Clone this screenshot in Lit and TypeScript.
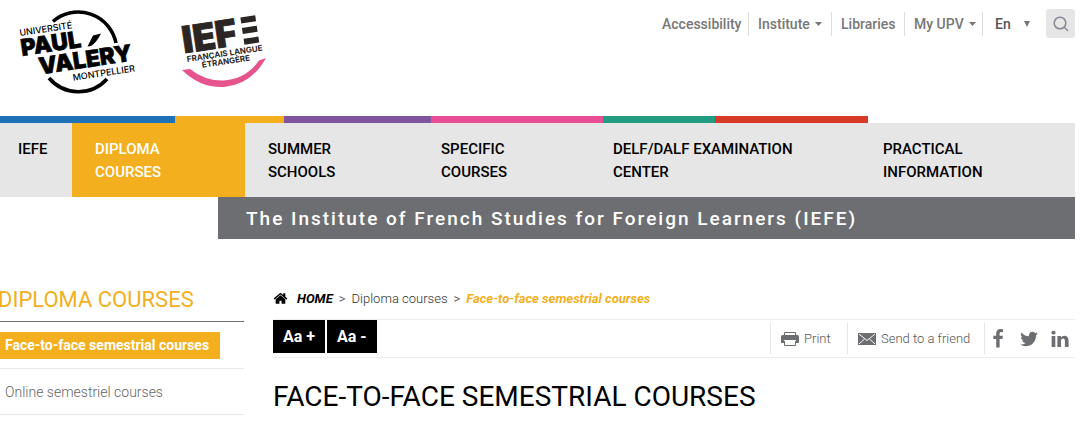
import { LitElement, html, css } from "lit";
import { customElement } from "lit/decorators.js";
import { classMap } from "lit/directives/class-map.js";

const FA = {
  home: "M1472 992v480q0 26-19 45t-45 19h-384v-384h-256v384h-384q-26 0-45-19t-19-45v-480q0-1 .5-3t.5-3l575-474 575 474q1 2 1 6zm223-69l-62 74q-8 9-21 11h-3q-13 0-21-7l-692-577-692 577q-12 8-24 7-13-2-21-11l-62-74q-8-10-7-23.5t11-21.5l719-599q32-26 76-26t76 26l244 204v-195q0-14 9-23t23-9h192q14 0 23 9t9 23v408l219 182q10 8 11 21.5t-7 23.5z",
  facebook: "M1343 12v264h-157q-86 0-116 36t-30 108v189h293l-39 296h-254v759h-306v-759h-255v-296h255v-218q0-186 104-288.5t277-102.5q147 0 228 12z",
  twitter: "M1684 408q-67 98-162 167 1 14 1 42 0 130-38 259.5t-115.5 248.5-184.5 210.5-258 146-323 54.5q-271 0-496-145 35 4 78 4 225 0 401-138-105-2-188-64.5t-114-159.5q33 5 61 5 43 0 85-11-112-23-185.5-111.5t-73.5-205.5v-4q68 38 146 41-66-44-105-115t-39-154q0-88 44-163 121 149 294.5 238.5t371.5 99.5q-8-38-8-74 0-134 94.5-228.5t228.5-94.5q140 0 236 102 109-21 205-78-37 115-142 178 93-10 186-50z",
  linkedin: "M477 625v991h-330v-991h330zm21-306q1 73-50.5 122t-135.5 49h-2q-82 0-132-49t-50-122q0-74 51.5-122.5t134.5-48.5 133 48.5 51 122.5zm1166 729v568h-329v-530q0-105-40.5-164.5t-126.5-59.5q-63 0-105.5 34.5t-63.5 85.5q-11 30-11 81v553h-329q2-399 2-647t-1-296l-1-48h329v144h-2q20-32 41-56t56.5-52 87-43.5 114.5-15.5q171 0 275 113.5t104 332.5z",
};

const icon = (d: string, size = 20) =>
  html`<svg width=${size} height=${size} viewBox="0 0 1792 1792" aria-hidden="true"><path fill="currentColor" d=${d}></path></svg>`;

const base = css`
  * { box-sizing: border-box; }
  a { color: inherit; text-decoration: none; }
  ul, ol { list-style: none; margin: 0; padding: 0; }
  svg { display: block; flex: none; }
`;

@customElement("site-header")
class SiteHeader extends LitElement {
  static styles = [base, css`
    :host { display: block; }
    .top { display: flex; justify-content: space-between; align-items: flex-start; height: 116px; }
    .logos { display: flex; }
    .tools { display: flex; align-items: center; padding-top: 9px; font-size: 14px; font-weight: 500; color: #777; }
    .links { display: grid; grid-template-columns: 87px 83px 73px 78px; }
    .links li { border-right: 1px solid #ddd; height: 24px; display: flex; align-items: center; padding-left: 9px; }
    .links li:first-child { padding-left: 0; }
    .links a { display: flex; align-items: center; gap: 5px; white-space: nowrap; }
    .lang { display: flex; align-items: center; width: 63px; padding-left: 12px; position: relative; }
    .lang select { appearance: none; border: 0; background: none; padding: 0; margin: 0; font: inherit; color: #555; width: 40px; }
    .lang svg { position: absolute; right: 16px; pointer-events: none; }
    .search { width: 29px; height: 29px; border: 0; border-radius: 3px; background: #e6e6e6; padding: 0; display: grid; place-items: center; color: #858796; }
    .stripe { display: grid; grid-template-columns: 175fr 109fr 147fr 172fr 112fr 153fr 207fr; height: 7px; }
    .blue { background: #1d71b8; }
    .orange { background: #f3af1d; }
    .purple { background: #81559d; }
    .pink { background: #e84e96; }
    .green { background: #219c80; }
    .red { background: #d93a27; }
    .menu { display: grid; grid-template-columns: 72fr 173fr 173fr 172fr 270fr 215fr; background: #e6e6e6; font-size: 15px; line-height: 23px; font-weight: 500; color: #000; }
    .menu a { display: block; padding: 15px 23px 13px; height: 74px; text-transform: uppercase; }
    .menu li:first-child a { padding-left: 18px; }
    .menu .active { background: #f3af1d; color: #fff; }
    .banner { margin-left: 218px; height: 42px; padding-left: 28px; background: #6d6e71; color: #fff; font-size: 19px; line-height: 43px; font-weight: 500; letter-spacing: 2px; white-space: nowrap; }
    .logo-text { font-family: Inter, Roboto, sans-serif; }
  `];

  private menu: [string, string][] = [
    ["IEFE", ""], ["Diploma", "courses"], ["Summer", "schools"],
    ["Specific", "courses"], ["DELF/DALF Examination", "center"], ["Practical", "information"],
  ];

  private caret = html`<svg width="7" height="4" viewBox="0 0 7 4"><path fill="currentColor" d="M0 0h7L3.5 4z"></path></svg>`;

  render() {
    return html`
      <header>
        <div class="top">
          <a class="logos" href="#" aria-label="Home">
            <svg class="logo-text" width="160" height="110" viewBox="0 0 160 110">
              <path d="M53 21.500A38.500 38.500 0 0 1 116 43M49 78A38.500 38.500 0 0 0 107 79" fill="none" stroke="#000" stroke-width="3.600"></path>
              <g transform="rotate(-8.5 20 36)">
                <text x="20" y="36" font-size="9" font-weight="500">UNIVERSITÉ</text>
                <g font-size="23" font-weight="900" stroke="#000" stroke-width=".6">
                  <text x="19" y="56">PAUL</text>
                  <text x="34" y="77">VALERY</text>
                </g>
                <text x="66" y="88" font-size="9" font-weight="500">MONTPELLIER</text>
              </g>
              <path d="M87.500 46.500L93 35.500L101 33.500Q97 42 91 46z"></path>
            </svg>
            <svg class="logo-text" width="130" height="110" viewBox="160 0 130 110">
              <g transform="rotate(-8.5 186 53)" fill="#2b2623">
                <text x="184" y="53" font-size="37" font-weight="900" stroke="#2b2623" stroke-width=".8">IEF</text>
                <path d="M245 26h15v6h-15zM245 36.500h15v6h-15zM245 47.500h15v6h-15z"></path>
                <text x="186" y="62" font-size="8" font-weight="700">FRANÇAIS LANGUE</text>
                <text x="200" y="70" font-size="8" font-weight="700">ÉTRANGÈRE</text>
              </g>
              <path fill="#e5548c" d="M182 70L190 69Q205 81 223 80.500Q246 79 259 60.500L266 58Q251 85 224 87Q200 88 182 70z"></path>
            </svg>
          </a>
          <div class="tools">
            <ul class="links">
              <li><a href="#">Accessibility</a></li>
              <li><a href="#">Institute ${this.caret}</a></li>
              <li><a href="#">Libraries</a></li>
              <li><a href="#">My UPV ${this.caret}</a></li>
            </ul>
            <div class="lang">
              <select aria-label="Language"><option>En</option><option>Fr</option></select>
              <svg width="6" height="6" viewBox="0 0 6 6"><path fill="#777" d="M0 0h6L3 6z"></path></svg>
            </div>
            <button class="search" aria-label="Search">
              <svg width="16" height="16" viewBox="0 0 16 16" fill="none" stroke="currentColor" stroke-width="1.5">
                <circle cx="7" cy="7" r="5.800"></circle><path d="M11 11l4 4"></path>
              </svg>
            </button>
          </div>
        </div>
        <div class="stripe">
          ${["blue", "orange", "purple", "pink", "green", "red"].map((c) => html`<span class=${c}></span>`)}
        </div>
        <nav>
          <ul class="menu">
            ${this.menu.map(([a, b], i) => html`
              <li><a href="#" class=${classMap({ active: i === 1 })}>${a}${b ? html`<br>${b}` : ""}</a></li>`)}
          </ul>
        </nav>
        <div class="banner">The Institute of French Studies for Foreign Learners (IEFE)</div>
      </header>`;
  }
}

@customElement("side-menu")
class SideMenu extends LitElement {
  static styles = [base, css`
    :host { display: block; padding-top: 2px; }
    h2 { margin: 0 0 0 -2px; font-size: 22px; line-height: 30px; font-weight: 400; color: #f3af1d; text-transform: uppercase; white-space: nowrap; }
    ul { margin-top: 6px; padding-top: 1px; border-top: 1px solid #6d6e71; font-size: 14px; color: #666; }
    li { border-bottom: 1px solid #e8e8e8; height: 46px; display: flex; align-items: center; }
    li a { padding: 0 5px; font-weight: 300; }
    li .active { background: #f3af1d; color: #fff; font-weight: 700; line-height: 27px; padding-right: 11px; }
  `];
  render() {
    return html`
      <h2>Diploma courses</h2>
      <ul>
        <li><a class="active" href="#">Face-to-face semestrial courses</a></li>
        <li><a href="#">Online semestriel courses</a></li>
      </ul>`;
  }
}

@customElement("page-content")
class PageContent extends LitElement {
  static styles = [base, css`
    :host { display: block; min-width: 0; }
    .crumbs { display: flex; align-items: center; gap: 6px; height: 30px; font-size: 13px; color: #666; }
    .crumbs li { display: flex; align-items: center; }
    .crumbs li + li::before { content: ">"; margin-right: 6px; }
    .crumbs a { font-weight: 300; color: #333; }
    .crumbs .home { display: flex; align-items: center; gap: 9px; color: #000; font-weight: 700; font-style: italic; }
    .crumbs .here { color: #f3af1d; font-weight: 700; font-style: italic; }
    .bar { display: flex; justify-content: space-between; margin-top: 6px; height: 39px; border-top: 1px solid #eee; border-bottom: 1px solid #eee; }
    .sizes { display: flex; gap: 2px; }
    .sizes button { border: 0; border-radius: 0; background: #000; color: #fff; font: inherit; font-size: 16px; font-weight: 700; height: 33px; padding: 0 10px; }
    .share { display: flex; align-items: center; font-size: 13px; font-weight: 300; color: #555; }
    .share a { display: flex; align-items: center; white-space: nowrap; }
    .action { height: 31px; border-left: 1px solid #e6e6e6; padding-left: 10px; gap: 5px; }
    .print { width: 77px; }
    .send { width: 137px; }
    .social { display: flex; align-items: center; gap: 11px; height: 31px; border-left: 1px solid #e6e6e6; padding: 0 5px 0 3px; color: #6d6e71; }
    h1 { margin: 21px 0 0; font-size: 28px; line-height: 36px; font-weight: 400; color: #000; text-transform: uppercase; }
  `];
  render() {
    return html`
      <nav aria-label="Breadcrumb">
        <ol class="crumbs">
          <li><a class="home" href="#">${icon(FA.home, 15)}HOME</a></li>
          <li><a href="#">Diploma courses</a></li>
          <li><span class="here">Face-to-face semestrial courses</span></li>
        </ol>
      </nav>
      <div class="bar">
        <div class="sizes"><button>Aa +</button><button>Aa -</button></div>
        <div class="share">
          <a class="action print" href="#">
            <svg width="18" height="16" viewBox="0 0 18 16">
              <path d="M3.500 5V1.500h11V5M3.500 10v4.500h11V10" fill="none" stroke="#6d6e71"></path>
              <path d="M1.500 4h15q1.500 0 1.500 1.500V12h-3V9H3v3H0V5.500Q0 4 1.500 4z" fill="#6d6e71"></path>
            </svg>Print</a>
          <a class="action send" href="#">
            <svg width="18" height="12" viewBox="0 0 18 12">
              <path d="M0 0h18v12H0z" fill="#6d6e71"></path>
              <path d="M1 1l8 6.500L17 1M1 11l5.500-5M17 11l-5.500-5" fill="none" stroke="#fff"></path>
            </svg>Send to a friend</a>
          <div class="social">
            <a href="#" aria-label="Facebook">${icon(FA.facebook)}</a>
            <a href="#" aria-label="Twitter">${icon(FA.twitter)}</a>
            <a href="#" aria-label="LinkedIn">${icon(FA.linkedin)}</a>
          </div>
        </div>
      </div>
      <h1>Face-to-face semestrial courses</h1>`;
  }
}

@customElement("app-root")
class AppRoot extends LitElement {
  static styles = css`
    :host { display: block; font-family: Roboto, "Noto Sans", sans-serif; background: #fff; padding-right: 5px; overflow-x: hidden; }
    .columns { display: grid; grid-template-columns: 244px minmax(0, 1fr); gap: 29px; padding: 44px 0 30px; }
  `;
  render() {
    return html`
      <site-header></site-header>
      <main class="columns">
        <side-menu></side-menu>
        <page-content></page-content>
      </main>`;
  }
}
